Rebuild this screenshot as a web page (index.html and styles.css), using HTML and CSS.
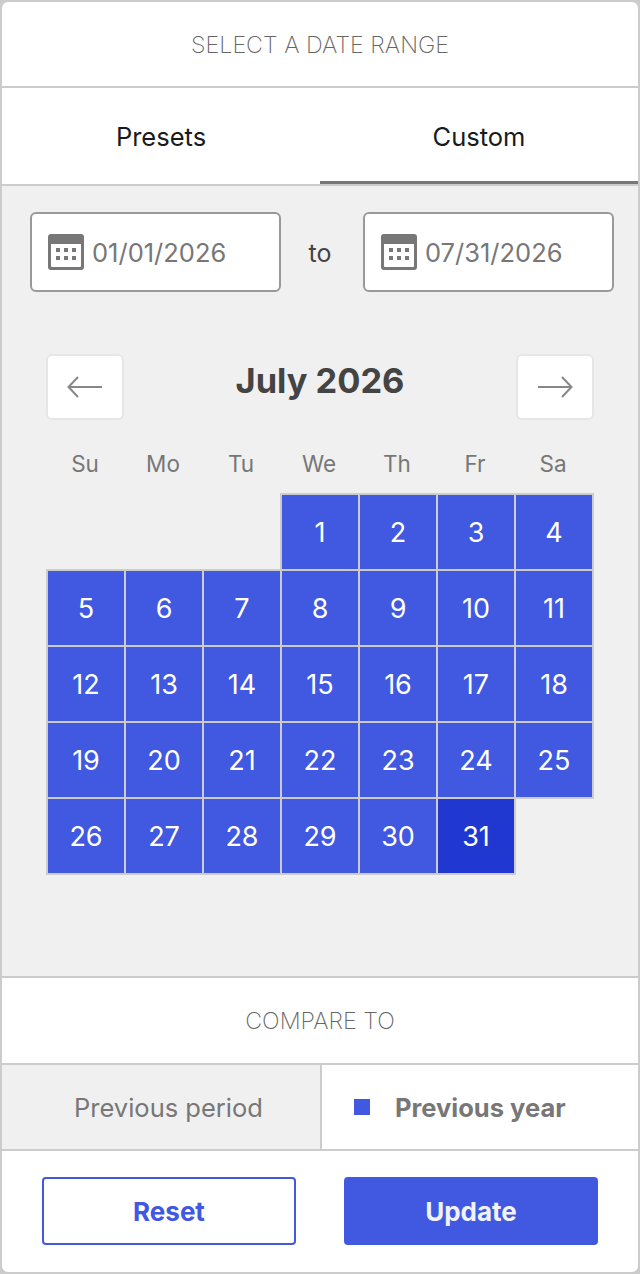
FILE: index.html
```html
<!DOCTYPE html>
<html lang="en">
<head>
  <meta charset="UTF-8">
  <meta name="viewport" content="width=device-width, initial-scale=1.0">
  <title>Select a date range</title>
  <link rel="stylesheet" href="styles.css">
</head>
<body>
  <div class="picker">
    <div class="heading heading-top">SELECT A DATE RANGE</div>

    <div class="tabs">
      <button class="tab">Presets</button>
      <button class="tab active">Custom</button>
    </div>

    <div class="panel">
      <div class="range">
        <div class="date-input">
          <svg class="cal-icon" viewBox="0 0 36 36">
            <path fill="#777" fill-rule="evenodd" d="M3 0h30a3 3 0 0 1 3 3v30a3 3 0 0 1-3 3H3a3 3 0 0 1-3-3V3a3 3 0 0 1 3-3zM3 10v22a1 1 0 0 0 1 1h28a1 1 0 0 0 1-1V10z"/>
            <path fill="#777" d="M8 14h4v4H8zM16 14h4v4h-4zM24 14h4v4h-4zM8 22h4v4H8zM16 22h4v4h-4zM24 22h4v4h-4z"/>
          </svg>
          <span>01/01/2026</span>
        </div>
        <span class="to">to</span>
        <div class="date-input">
          <svg class="cal-icon" viewBox="0 0 36 36">
            <path fill="#777" fill-rule="evenodd" d="M3 0h30a3 3 0 0 1 3 3v30a3 3 0 0 1-3 3H3a3 3 0 0 1-3-3V3a3 3 0 0 1 3-3zM3 10v22a1 1 0 0 0 1 1h28a1 1 0 0 0 1-1V10z"/>
            <path fill="#777" d="M8 14h4v4H8zM16 14h4v4h-4zM24 14h4v4h-4zM8 22h4v4H8zM16 22h4v4h-4zM24 22h4v4h-4z"/>
          </svg>
          <span>07/31/2026</span>
        </div>
      </div>

      <div class="month-nav">
        <button class="nav-btn">
          <svg viewBox="0 0 36 22" width="36" height="22"><path d="M35 11H2M11 1 1.500 11 11 21" fill="none" stroke="#888" stroke-width="2"/></svg>
        </button>
        <div class="month-title">July 2026</div>
        <button class="nav-btn">
          <svg viewBox="0 0 36 22" width="36" height="22"><path d="M1 11h33M25 1l9.500 10L25 21" fill="none" stroke="#888" stroke-width="2"/></svg>
        </button>
      </div>

      <div class="weekdays">
        <span>Su</span><span>Mo</span><span>Tu</span><span>We</span><span>Th</span><span>Fr</span><span>Sa</span>
      </div>

      <div class="days">
        <div class="day empty"></div>
        <div class="day empty"></div>
        <div class="day empty"></div>
        <div class="day">1</div>
        <div class="day">2</div>
        <div class="day">3</div>
        <div class="day">4</div>
        <div class="day">5</div>
        <div class="day">6</div>
        <div class="day">7</div>
        <div class="day">8</div>
        <div class="day">9</div>
        <div class="day">10</div>
        <div class="day">11</div>
        <div class="day">12</div>
        <div class="day">13</div>
        <div class="day">14</div>
        <div class="day">15</div>
        <div class="day">16</div>
        <div class="day">17</div>
        <div class="day">18</div>
        <div class="day">19</div>
        <div class="day">20</div>
        <div class="day">21</div>
        <div class="day">22</div>
        <div class="day">23</div>
        <div class="day">24</div>
        <div class="day">25</div>
        <div class="day">26</div>
        <div class="day">27</div>
        <div class="day">28</div>
        <div class="day">29</div>
        <div class="day">30</div>
        <div class="day end">31</div>
      </div>
    </div>

    <div class="heading heading-compare">COMPARE TO</div>

    <div class="compare">
      <div class="compare-option">Previous period</div>
      <div class="compare-option selected"><i class="marker"></i>Previous year</div>
    </div>

    <div class="actions">
      <button class="action reset">Reset</button>
      <button class="action update">Update</button>
    </div>
  </div>
</body>
</html>
```

FILE: styles.css
```css
* {
  box-sizing: border-box;
}

body {
  margin: 0;
  font-family: Inter, "Liberation Sans", sans-serif;
  background: #cccccc;
}

button {
  font-family: inherit;
  padding: 0;
  cursor: pointer;
}

.picker {
  width: 640px;
  height: 1274px;
  border: 2px solid #cccccc;
  border-radius: 8px;
  background: #ffffff;
  display: flex;
  flex-direction: column;
  overflow: hidden;
}

.heading {
  display: flex;
  align-items: center;
  justify-content: center;
  font-size: 23.3px;
  font-weight: 200;
  color: #666666;
  border-bottom: 2px solid #cccccc;
}

.heading-top {
  height: 86px;
  padding-top: 1px;
}

.heading-compare {
  height: 87px;
}

.tabs {
  display: flex;
  height: 98px;
  border-bottom: 2px solid #cccccc;
}

.tab {
  flex: 1;
  padding-top: 3px;
  border: none;
  border-bottom: 3px solid transparent;
  background: none;
  font-size: 25.5px;
  color: #1a1a1a;
}

.tab.active {
  border-bottom-color: #777777;
}

.panel {
  height: 792px;
  background: #f0f0f0;
  border-bottom: 2px solid #cccccc;
  padding: 26px 44px 0;
}

.range {
  display: flex;
  align-items: center;
  margin: 0 -20px 0 -16px;
  justify-content: space-between;
}

.date-input {
  width: 251px;
  height: 80px;
  display: flex;
  align-items: center;
  gap: 8px;
  padding-left: 16px;
  background: #ffffff;
  border: 2px solid #999999;
  border-radius: 6px;
  font-size: 25.5px;
  color: #777777;
}

.date-input span {
  padding-top: 1px;
}

.cal-icon {
  width: 36px;
  height: 36px;
  flex: none;
}

.to {
  padding-top: 1px;
  font-size: 25px;
  color: #444444;
  margin-left: -4px;
}

.month-nav {
  display: flex;
  align-items: center;
  justify-content: space-between;
  margin-top: 62px;
}

.nav-btn {
  width: 78px;
  height: 66px;
  display: flex;
  align-items: center;
  justify-content: center;
  background: #ffffff;
  border: 2px solid #e6e6e6;
  border-radius: 6px;
}

.month-title {
  font-size: 34.4px;
  font-weight: 700;
  color: #444444;
  margin-top: -14px;
}

.weekdays {
  display: grid;
  grid-template-columns: repeat(7, 78px);
  margin-top: 30px;
  height: 43px;
  font-size: 22.5px;
  color: #777777;
  text-align: center;
}

.days {
  display: grid;
  grid-template-columns: repeat(7, 78px);
  grid-auto-rows: 76px;
}

.day {
  width: 80px;
  height: 78px;
  display: flex;
  align-items: center;
  justify-content: center;
  background: #4059e0;
  border: 2px solid #cccccc;
  font-size: 27px;
  color: #ffffff;
}

.day.empty {
  visibility: hidden;
}

.day.end {
  background: #2038d0;
}

.compare {
  display: flex;
  height: 86px;
  border-bottom: 2px solid #cccccc;
  font-size: 25.5px;
  color: #777777;
}

.compare-option {
  width: 318px;
  display: flex;
  align-items: center;
  padding-left: 72px;
  background: #f0f0f0;
}

.compare-option.selected {
  flex: 1;
  padding-left: 32px;
  background: #ffffff;
  border-left: 2px solid #cccccc;
  font-weight: 700;
}

.marker {
  width: 16px;
  height: 16px;
  margin-right: 25px;
  background: #4059e0;
}

.actions {
  display: flex;
  justify-content: space-between;
  padding: 26px 40px 0;
}

.action {
  width: 254px;
  height: 68px;
  border: 2px solid #4059e0;
  border-radius: 4px;
  font-size: 26px;
  font-weight: 700;
}

.reset {
  background: #ffffff;
  color: #4059e0;
}

.update {
  background: #4059e0;
  color: #f0f2fc;
}
```
